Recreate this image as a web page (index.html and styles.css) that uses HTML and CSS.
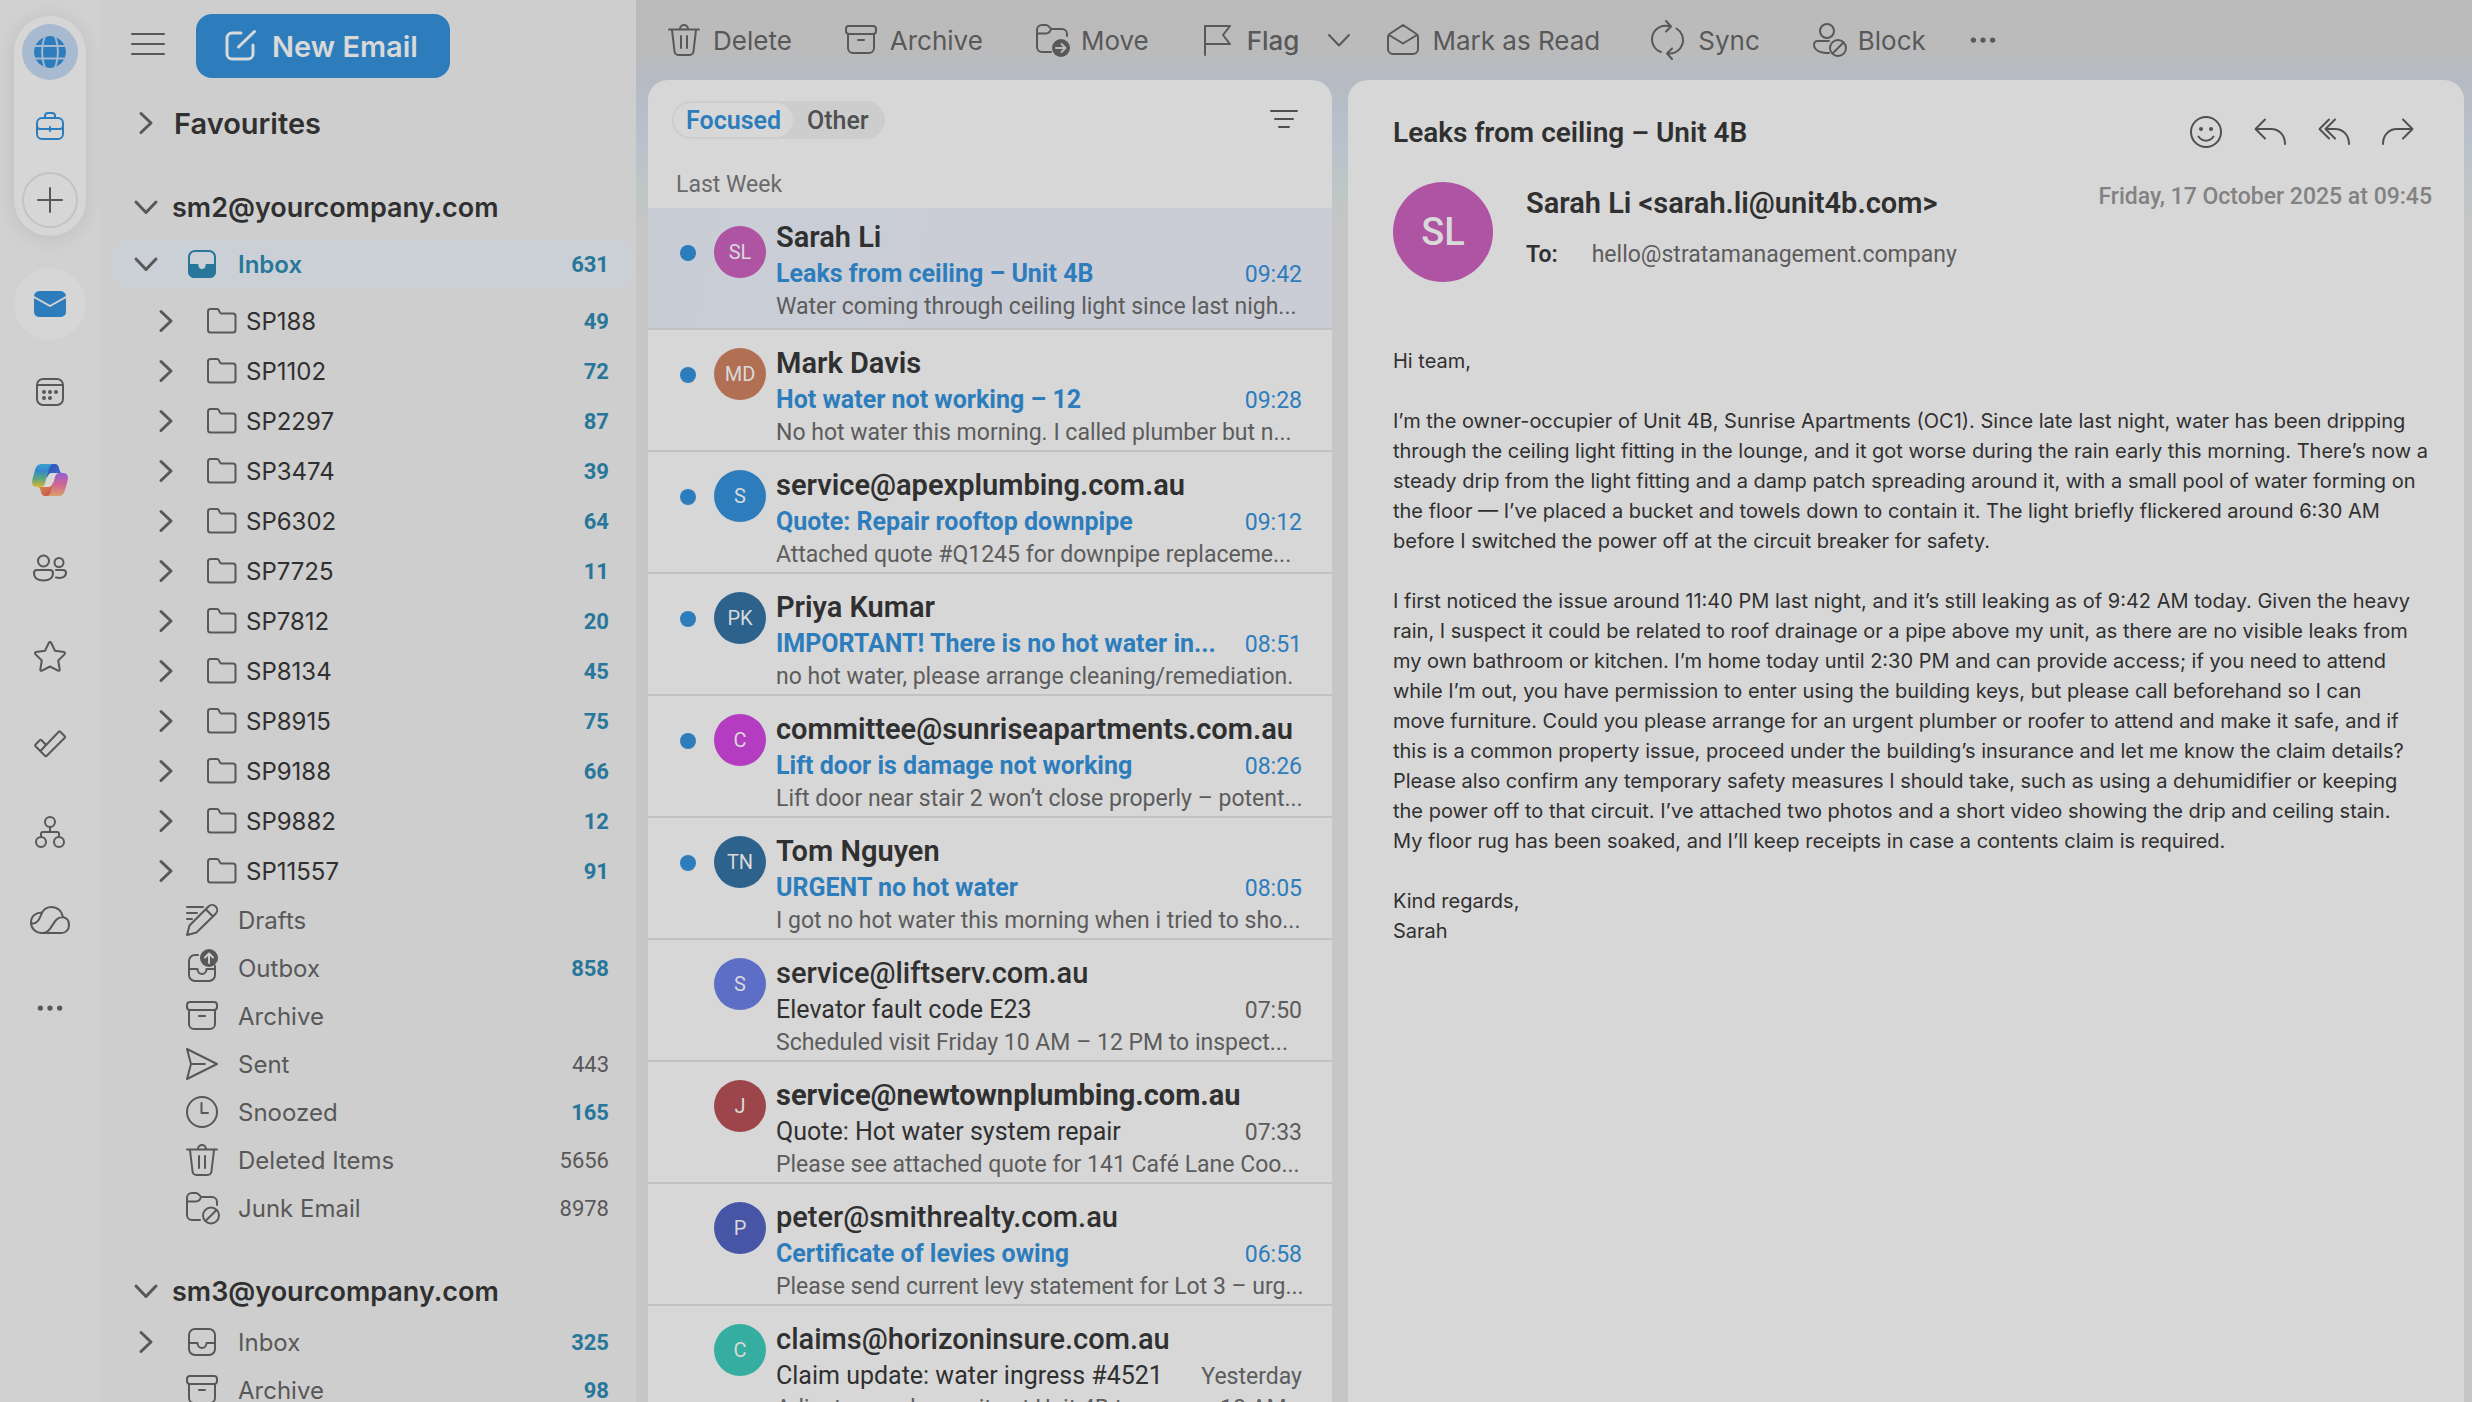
FILE: index.html
```html
<!DOCTYPE html>
<html lang="en">
<head>
    <meta charset="UTF-8">
    <meta name="viewport" content="width=device-width, initial-scale=1.0">
    <title>Inbox - Mail</title>
    <link rel="stylesheet" href="styles.css">
</head>
<body>
    <!-- icon sprite -->
    <svg class="sprite" aria-hidden="true">
        <symbol id="chev-right" viewBox="0 0 32 32"><path d="M11 6.500l10 9.500-10 9.500"/></symbol>
        <symbol id="chev-down" viewBox="0 0 32 32"><path d="M6 11l10 10.500L26 11"/></symbol>
        <symbol id="trash" viewBox="0 0 32 32"><path d="M1 5.500h30M12 5a4 4 0 0 1 8 0M4 6l2.500 21a4 4 0 0 0 4 4h11a4 4 0 0 0 4-4L28 6M13 12v12M19 12v12"/></symbol>
        <symbol id="archive" viewBox="0 0 32 32"><rect x="1" y="2" width="30" height="8" rx="3"/><path d="M3 10v14a5 5 0 0 0 5 5h16a5 5 0 0 0 5-5V10M13 16h6"/></symbol>
        <symbol id="folder" viewBox="0 0 32 32"><path d="M2 25V6.500A2.500 2.500 0 0 1 4.500 4h6.500a2 2 0 0 1 1.800 1.200L14 7.500a2 2 0 0 0 1.800 1H27A2.500 2.500 0 0 1 29.500 11v14a2.500 2.500 0 0 1-2.500 2.500H4.500A2.500 2.500 0 0 1 2 25z"/></symbol>
        <symbol id="inbox" viewBox="0 0 32 32"><rect x="3" y="3" width="26" height="26" rx="6"/><path d="M3 17h8.500c0 3 2 5 4.500 5s4.500-2 4.500-5H29"/></symbol>
        <symbol id="inbox-fill" viewBox="0 0 32 32"><rect x="3" y="3" width="26" height="26" rx="6"/><path class="solid" d="M3 17h8.500c0 3 2 5 4.500 5s4.500-2 4.500-5H29v7a5 5 0 0 1-5 5H8a5 5 0 0 1-5-5z"/></symbol>
        <symbol id="outbox" viewBox="0 0 32 32"><path d="M12 3H9a6 6 0 0 0-6 6v14a6 6 0 0 0 6 6h14a6 6 0 0 0 6-6v-9M3 17h8.500c0 3 2 5 4.500 5s4.500-2 4.500-5H29"/><circle class="fill" cx="23" cy="6" r="9"/><path class="knock" d="M23 11V2M19 5.500l4-4 4 4"/></symbol>
        <symbol id="drafts" viewBox="0 0 32 32"><path d="M1 3h16M1 9h10M1 15h5M1 31l2.500-9.500L22.500 2.500a5 5 0 0 1 7.200 7.200L10.500 28.500zM20 5.500l6.500 6.500"/></symbol>
        <symbol id="sent" viewBox="0 0 32 32"><path d="M1 1l30 15L1 31l4-15zM5 16h14"/></symbol>
        <symbol id="clock" viewBox="0 0 32 32"><circle cx="16" cy="16" r="15"/><path d="M15.500 7v10H22"/></symbol>
        <symbol id="junk" viewBox="0 0 32 32"><path d="M14 28H6a5 5 0 0 1-5-5V6a5 5 0 0 1 5-5h4c3 0 4 4 6 4h10a5 5 0 0 1 5 5v3M1 9.500h9c3 0 4-1.500 5-4.500"/><circle cx="25" cy="23.500" r="8"/><path d="M19.500 29l11-11"/></symbol>
        <symbol id="move" viewBox="0 0 32 32"><path d="M15 28H6a5 5 0 0 1-5-5V6a5 5 0 0 1 5-5h4c3 0 4 4 6 4h10a5 5 0 0 1 5 5v2M1 9.500h9c3 0 4-1.500 5-4.500"/><circle class="fill" cx="25" cy="24" r="9"/><path class="knock" d="M20 24h9M25.500 20l4 4-4 4"/></symbol>
        <symbol id="flag" viewBox="0 0 32 32"><path d="M3 31V2h25l-7 9 7 9H3"/></symbol>
        <symbol id="mail-open" viewBox="0 0 32 32"><path d="M1 12.500a3 3 0 0 1 1.500-2.500L16 1l13.500 9a3 3 0 0 1 1.500 2.500V25a5 5 0 0 1-5 5H6a5 5 0 0 1-5-5zM2 11l14 8.500L30 11"/></symbol>
        <symbol id="sync" viewBox="0 0 32 32"><path d="M8 28A13.500 13.500 0 0 1 17 2.500M13-3l5 5.500-5 5M23.500 4.500A13.500 13.500 0 0 1 15 29.500M19 24.500l-5 5 5 5.500"/></symbol>
        <symbol id="block" viewBox="0 0 32 32"><circle cx="14" cy="7" r="7"/><path d="M16 29C7 29 1 26 1 20.500A3.500 3.500 0 0 1 4.500 17H16"/><circle cx="25" cy="24" r="8"/><path d="M19.500 29.500l11-11"/></symbol>
        <symbol id="dots" viewBox="0 0 32 32"><circle class="fill" cx="5" cy="16" r="3"/><circle class="fill" cx="16" cy="16" r="3"/><circle class="fill" cx="27" cy="16" r="3"/></symbol>
        <symbol id="filter" viewBox="0 0 32 32"><path d="M3 7h26M7 15h18M11 23h10"/></symbol>
        <symbol id="menu" viewBox="0 0 32 32"><path d="M0 6h32M0 16h32M0 26h32"/></symbol>
        <symbol id="compose" viewBox="0 0 32 32"><path d="M17 3H8a5 5 0 0 0-5 5v16a5 5 0 0 0 5 5h16a5 5 0 0 0 5-5v-9M14.500 17L30.500 1.500"/></symbol>
        <symbol id="globe" viewBox="0 0 32 32"><circle class="fill" cx="16" cy="16" r="16"/><path class="knock" d="M0 10h32M0 22.500h32M11.500-1c-4.500 10-4.500 24 0 34M20.500-1c4.500 10 4.500 24 0 34"/></symbol>
        <symbol id="briefcase" viewBox="0 0 32 32"><rect x="3" y="8" width="26" height="21" rx="5"/><path d="M11 8V6a3 3 0 0 1 3-3h4a3 3 0 0 1 3 3v2M3 16a3 3 0 0 0 3 3h20a3 3 0 0 0 3-3M16 17v4"/></symbol>
        <symbol id="plus" viewBox="0 0 32 32"><path d="M16 4v24M4 16h24"/></symbol>
        <symbol id="mail" viewBox="0 0 32 32"><path class="fill" d="M0 8.500A5.500 5.500 0 0 1 5.500 3h21A5.500 5.500 0 0 1 32 8.500V24a5 5 0 0 1-5 5H5a5 5 0 0 1-5-5z"/><path class="knock" d="M-1 8.500l17 9.500 17-9.500"/></symbol>
        <symbol id="calendar" viewBox="0 0 32 32"><rect x="3" y="3" width="26" height="26" rx="6"/><path d="M3 9h26"/><circle class="fill" cx="10" cy="16" r="2"/><circle class="fill" cx="16" cy="16" r="2"/><circle class="fill" cx="22" cy="16" r="2"/><circle class="fill" cx="10" cy="22" r="2"/><circle class="fill" cx="16" cy="22" r="2"/></symbol>
        <symbol id="people" viewBox="0 0 36 32"><circle cx="11.500" cy="9" r="5.500"/><circle cx="27" cy="10.500" r="4.500"/><path d="M5 18h13a3 3 0 0 1 3 3c0 5-4 7.500-9.500 7.500S2 26 2 21a3 3 0 0 1 3-3zM24 18h7a3 3 0 0 1 3 3c0 3.500-4 6-10 4.500"/></symbol>
        <symbol id="star" viewBox="0 0 32 32"><path d="M15 2.500a1.200 1.200 0 0 1 2 0l4 8.300 9 1.300a1.200 1.200 0 0 1 .7 2l-6.500 6.400 1.500 9a1.200 1.200 0 0 1-1.700 1.200L16 26.500l-8 4.200a1.200 1.200 0 0 1-1.700-1.200l1.500-9L1.300 14.100a1.200 1.200 0 0 1 .7-2l9-1.300z"/></symbol>
        <symbol id="todo" viewBox="0 0 32 32"><path d="M26 3.500l5 5a.800.800 0 0 1 0 1L12.500 28a1 1 0 0 1-1.300 0L1.300 18a1 1 0 0 1 0-1.300L6 12a1 1 0 0 1 1.300 0l4.800 5L25 3.500a.8.800 0 0 1 1 0zM12 17l-5.500 6"/></symbol>
        <symbol id="org" viewBox="0 0 32 32"><circle cx="16" cy="6" r="5"/><circle cx="7" cy="26" r="5"/><circle cx="25" cy="26" r="5"/><path d="M16 11v5M7 21v-3a2 2 0 0 1 2-2h14a2 2 0 0 1 2 2v3"/></symbol>
        <symbol id="cloud" viewBox="0 0 40 32"><path d="M12 29C5 29 1 24 1 18.500 1 12 6 8.500 12 8.500 14 5 17.500 3 21.500 3c6 0 10.500 4 11.500 10 3.500.800 6 4 6 8 0 5-3.500 8-7.500 8zM12.500 8C10 12 9 20 2 19.500M33 13c-11 0-10 16-20.500 16"/></symbol>
        <symbol id="smile" viewBox="0 0 32 32"><circle cx="16" cy="16" r="15"/><circle class="fill" cx="11" cy="13" r="2"/><circle class="fill" cx="21" cy="13" r="2"/><path d="M8.500 20.500c4 5.500 11 5.500 15 0"/></symbol>
        <symbol id="reply" viewBox="0 0 32 32"><path d="M11 3.500L1.500 13l9.500 9.500M1.500 13H17c8 0 14 6 14 15"/></symbol>
        <symbol id="reply-all" viewBox="0 0 32 32"><path d="M11 3.500L1.500 13l9.500 9.500M17 3.500L7.500 13l9.500 9.500M7.500 13H17c8 0 14 6 14 15"/></symbol>
        <symbol id="forward" viewBox="0 0 32 32"><path d="M21 3.500l9.500 9.500-9.500 9.500M30.500 13H15C7 13 1 19 1 28"/></symbol>
    </svg>

    <div class="app">
        <nav class="rail" aria-label="Apps">
            <div class="account-pill">
                <button class="pill-btn active" aria-label="All accounts"><svg class="icon"><use href="#globe"/></svg></button>
                <button class="pill-btn" aria-label="Work"><svg class="icon"><use href="#briefcase"/></svg></button>
                <button class="pill-btn add" aria-label="Add account"><svg class="icon"><use href="#plus"/></svg></button>
            </div>
            <div class="rail-items">
                <button class="rail-btn active" aria-label="Mail"><svg class="icon"><use href="#mail"/></svg></button>
                <button class="rail-btn" aria-label="Calendar"><svg class="icon"><use href="#calendar"/></svg></button>
                <button class="rail-btn" aria-label="Copilot">
                    <svg class="icon-copilot" viewBox="0 0 36 32">
                        <defs>
                            <linearGradient id="cp-left" x1="0" y1="0" x2="0" y2="1"><stop offset="0" stop-color="#3a9fd2"/><stop offset=".3" stop-color="#3488cc"/><stop offset=".65" stop-color="#5fa67c"/><stop offset="1" stop-color="#d8b832"/></linearGradient>
                            <linearGradient id="cp-right" x1="0" y1="0" x2="0" y2="1"><stop offset="0" stop-color="#9460d2"/><stop offset=".5" stop-color="#cf6594"/><stop offset="1" stop-color="#d9a06a"/></linearGradient>
                            <linearGradient id="cp-top" x1="0" y1="0" x2="1" y2="1"><stop offset="0" stop-color="#2c50b4"/><stop offset="1" stop-color="#3f72d0"/></linearGradient>
                            <linearGradient id="cp-bottom" x1="0" y1="0" x2="1" y2="1"><stop offset="0" stop-color="#d99a4c"/><stop offset="1" stop-color="#c64b4b"/></linearGradient>
                        </defs>
                        <path fill="#d9d9d9" d="M17 9h8l-5 14h-8z"/>
                        <path fill="url(#cp-top)" d="M14 0h9c2 0 3 1 3.700 3l1 3.500C28.300 8.500 29 9 31 9H20c-3 0-4 2-5 5z"/>
                        <path fill="url(#cp-bottom)" d="M22 32h-9c-2 0-3-1-3.700-3l-1-3.500C7.700 23.500 7 23 5 23h11c3 0 4-2 5-5z"/>
                        <path fill="url(#cp-left)" d="M10 0h12c-3 0-4 2-5 5l-4 14c-1 3-2 4-4.500 4H5c-5 0-5.500-4-4.500-8L3 6c1-4 3-6 7-6z"/>
                        <path fill="url(#cp-right)" d="M26 32H14c3 0 4-2 5-5l4-14c1-3 2-4 4.500-4H31c5 0 5.500 4 4.500 8L33 26c-1 4-3 6-7 6z"/>
                    </svg>
                </button>
                <button class="rail-btn" aria-label="People"><svg class="icon wide"><use href="#people"/></svg></button>
                <button class="rail-btn" aria-label="Favourites"><svg class="icon"><use href="#star"/></svg></button>
                <button class="rail-btn" aria-label="To Do"><svg class="icon"><use href="#todo"/></svg></button>
                <button class="rail-btn" aria-label="Org chart"><svg class="icon"><use href="#org"/></svg></button>
                <button class="rail-btn" aria-label="OneDrive"><svg class="icon wider"><use href="#cloud"/></svg></button>
                <button class="rail-btn" aria-label="More apps"><svg class="icon small"><use href="#dots"/></svg></button>
            </div>
        </nav>

        <aside class="sidebar">
            <div class="sidebar-top">
                <button class="menu-btn" aria-label="Toggle folders"><svg class="icon"><use href="#menu"/></svg></button>
                <button class="new-email"><svg class="icon"><use href="#compose"/></svg>New Email</button>
            </div>

            <a href="#" class="section-row"><svg class="chev"><use href="#chev-right"/></svg>Favourites</a>

            <a href="#" class="account-row"><svg class="chev"><use href="#chev-down"/></svg>sm2@yourcompany.com</a>
            <a href="#" class="folder-row selected"><svg class="chev"><use href="#chev-down"/></svg><svg class="icon"><use href="#inbox-fill"/></svg><span class="label">Inbox</span><span class="count unread">631</span></a>

            <div class="subfolders">
                <a href="#" class="sub-row"><svg class="chev"><use href="#chev-right"/></svg><svg class="icon"><use href="#folder"/></svg><span class="label">SP188</span><span class="count unread">49</span></a>
                <a href="#" class="sub-row"><svg class="chev"><use href="#chev-right"/></svg><svg class="icon"><use href="#folder"/></svg><span class="label">SP1102</span><span class="count unread">72</span></a>
                <a href="#" class="sub-row"><svg class="chev"><use href="#chev-right"/></svg><svg class="icon"><use href="#folder"/></svg><span class="label">SP2297</span><span class="count unread">87</span></a>
                <a href="#" class="sub-row"><svg class="chev"><use href="#chev-right"/></svg><svg class="icon"><use href="#folder"/></svg><span class="label">SP3474</span><span class="count unread">39</span></a>
                <a href="#" class="sub-row"><svg class="chev"><use href="#chev-right"/></svg><svg class="icon"><use href="#folder"/></svg><span class="label">SP6302</span><span class="count unread">64</span></a>
                <a href="#" class="sub-row"><svg class="chev"><use href="#chev-right"/></svg><svg class="icon"><use href="#folder"/></svg><span class="label">SP7725</span><span class="count unread">11</span></a>
                <a href="#" class="sub-row"><svg class="chev"><use href="#chev-right"/></svg><svg class="icon"><use href="#folder"/></svg><span class="label">SP7812</span><span class="count unread">20</span></a>
                <a href="#" class="sub-row"><svg class="chev"><use href="#chev-right"/></svg><svg class="icon"><use href="#folder"/></svg><span class="label">SP8134</span><span class="count unread">45</span></a>
                <a href="#" class="sub-row"><svg class="chev"><use href="#chev-right"/></svg><svg class="icon"><use href="#folder"/></svg><span class="label">SP8915</span><span class="count unread">75</span></a>
                <a href="#" class="sub-row"><svg class="chev"><use href="#chev-right"/></svg><svg class="icon"><use href="#folder"/></svg><span class="label">SP9188</span><span class="count unread">66</span></a>
                <a href="#" class="sub-row"><svg class="chev"><use href="#chev-right"/></svg><svg class="icon"><use href="#folder"/></svg><span class="label">SP9882</span><span class="count unread">12</span></a>
                <a href="#" class="sub-row"><svg class="chev"><use href="#chev-right"/></svg><svg class="icon"><use href="#folder"/></svg><span class="label">SP11557</span><span class="count unread">91</span></a>
            </div>

            <a href="#" class="folder-row"><span class="chev"></span><svg class="icon"><use href="#drafts"/></svg><span class="label">Drafts</span></a>
            <a href="#" class="folder-row"><span class="chev"></span><svg class="icon"><use href="#outbox"/></svg><span class="label">Outbox</span><span class="count unread">858</span></a>
            <a href="#" class="folder-row"><span class="chev"></span><svg class="icon"><use href="#archive"/></svg><span class="label">Archive</span></a>
            <a href="#" class="folder-row"><span class="chev"></span><svg class="icon"><use href="#sent"/></svg><span class="label">Sent</span><span class="count">443</span></a>
            <a href="#" class="folder-row"><span class="chev"></span><svg class="icon"><use href="#clock"/></svg><span class="label">Snoozed</span><span class="count unread">165</span></a>
            <a href="#" class="folder-row"><span class="chev"></span><svg class="icon"><use href="#trash"/></svg><span class="label">Deleted Items</span><span class="count">5656</span></a>
            <a href="#" class="folder-row"><span class="chev"></span><svg class="icon"><use href="#junk"/></svg><span class="label">Junk Email</span><span class="count">8978</span></a>

            <a href="#" class="account-row"><svg class="chev"><use href="#chev-down"/></svg>sm3@yourcompany.com</a>
            <a href="#" class="folder-row"><svg class="chev"><use href="#chev-right"/></svg><svg class="icon"><use href="#inbox"/></svg><span class="label">Inbox</span><span class="count unread">325</span></a>
            <a href="#" class="folder-row"><span class="chev"></span><svg class="icon"><use href="#archive"/></svg><span class="label">Archive</span><span class="count unread">98</span></a>
        </aside>

        <main class="main">
            <div class="toolbar">
                <button class="tool-btn"><svg class="icon"><use href="#trash"/></svg>Delete</button>
                <button class="tool-btn"><svg class="icon"><use href="#archive"/></svg>Archive</button>
                <button class="tool-btn"><svg class="icon"><use href="#move"/></svg>Move</button>
                <div class="tool-group">
                    <button class="tool-btn medium"><svg class="icon"><use href="#flag"/></svg>Flag</button>
                    <button class="tool-btn" aria-label="Flag options"><svg class="icon"><use href="#chev-down"/></svg></button>
                    <button class="tool-btn"><svg class="icon"><use href="#mail-open"/></svg>Mark as Read</button>
                </div>
                <button class="tool-btn"><svg class="icon"><use href="#sync"/></svg>Sync</button>
                <button class="tool-btn"><svg class="icon"><use href="#block"/></svg>Block</button>
                <button class="tool-btn more" aria-label="More"><svg class="icon small"><use href="#dots"/></svg></button>
            </div>

            <div class="panels">
                <section class="message-list">
                    <div class="list-head">
                        <div class="tabs">
                            <button class="tab active">Focused</button>
                            <button class="tab">Other</button>
                        </div>
                        <button class="filter-btn" aria-label="Filter"><svg class="icon"><use href="#filter"/></svg></button>
                    </div>
                    <div class="group-title">Last Week</div>

                    <article class="message unread selected">
                        <span class="dot"></span>
                        <div class="avatar pink">SL</div>
                        <div class="message-text">
                            <div class="sender">Sarah Li</div>
                            <div class="subject-line"><span class="subject">Leaks from ceiling – Unit 4B</span><time>09:42</time></div>
                            <div class="preview">Water coming through ceiling light since last nigh...</div>
                        </div>
                    </article>
                    <article class="message unread">
                        <span class="dot"></span>
                        <div class="avatar orange">MD</div>
                        <div class="message-text">
                            <div class="sender">Mark Davis</div>
                            <div class="subject-line"><span class="subject">Hot water not working – 12</span><time>09:28</time></div>
                            <div class="preview">No hot water this morning. I called plumber but n...</div>
                        </div>
                    </article>
                    <article class="message unread">
                        <span class="dot"></span>
                        <div class="avatar blue">S</div>
                        <div class="message-text">
                            <div class="sender">service@apexplumbing.com.au</div>
                            <div class="subject-line"><span class="subject">Quote: Repair rooftop downpipe</span><time>09:12</time></div>
                            <div class="preview">Attached quote #Q1245 for downpipe replaceme...</div>
                        </div>
                    </article>
                    <article class="message unread">
                        <span class="dot"></span>
                        <div class="avatar navy">PK</div>
                        <div class="message-text">
                            <div class="sender">Priya Kumar</div>
                            <div class="subject-line"><span class="subject">IMPORTANT! There is no hot water in...</span><time>08:51</time></div>
                            <div class="preview">no hot water, please arrange cleaning/remediation.</div>
                        </div>
                    </article>
                    <article class="message unread">
                        <span class="dot"></span>
                        <div class="avatar magenta">C</div>
                        <div class="message-text">
                            <div class="sender">committee@sunriseapartments.com.au</div>
                            <div class="subject-line"><span class="subject">Lift door is damage not working</span><time>08:26</time></div>
                            <div class="preview">Lift door near stair 2 won’t close properly – potent...</div>
                        </div>
                    </article>
                    <article class="message unread">
                        <span class="dot"></span>
                        <div class="avatar navy">TN</div>
                        <div class="message-text">
                            <div class="sender">Tom Nguyen</div>
                            <div class="subject-line"><span class="subject">URGENT no hot water</span><time>08:05</time></div>
                            <div class="preview">I got no hot water this morning when i tried to sho...</div>
                        </div>
                    </article>
                    <article class="message">
                        <span class="dot"></span>
                        <div class="avatar periwinkle">S</div>
                        <div class="message-text">
                            <div class="sender">service@liftserv.com.au</div>
                            <div class="subject-line"><span class="subject">Elevator fault code E23</span><time>07:50</time></div>
                            <div class="preview">Scheduled visit Friday 10 AM – 12 PM to inspect...</div>
                        </div>
                    </article>
                    <article class="message">
                        <span class="dot"></span>
                        <div class="avatar red">J</div>
                        <div class="message-text">
                            <div class="sender bold">service@newtownplumbing.com.au</div>
                            <div class="subject-line"><span class="subject">Quote: Hot water system repair</span><time>07:33</time></div>
                            <div class="preview">Please see attached quote for 141 Café Lane Coo...</div>
                        </div>
                    </article>
                    <article class="message flagged">
                        <span class="dot"></span>
                        <div class="avatar indigo">P</div>
                        <div class="message-text">
                            <div class="sender">peter@smithrealty.com.au</div>
                            <div class="subject-line"><span class="subject">Certificate of levies owing</span><time>06:58</time></div>
                            <div class="preview">Please send current levy statement for Lot 3 – urg...</div>
                        </div>
                    </article>
                    <article class="message">
                        <span class="dot"></span>
                        <div class="avatar teal">C</div>
                        <div class="message-text">
                            <div class="sender">claims@horizoninsure.com.au</div>
                            <div class="subject-line"><span class="subject">Claim update: water ingress #4521</span><time>Yesterday</time></div>
                            <div class="preview">Adjuster can be onsite at Unit 4B tomorrow 10 AM...</div>
                        </div>
                    </article>
                </section>

                <section class="reading">
                    <div class="reading-head">
                        <h1>Leaks from ceiling – Unit 4B</h1>
                        <div class="actions">
                            <button aria-label="React"><svg class="icon"><use href="#smile"/></svg></button>
                            <button aria-label="Reply"><svg class="icon"><use href="#reply"/></svg></button>
                            <button aria-label="Reply all"><svg class="icon"><use href="#reply-all"/></svg></button>
                            <button aria-label="Forward"><svg class="icon"><use href="#forward"/></svg></button>
                        </div>
                    </div>
                    <div class="from">
                        <div class="avatar large pink">SL</div>
                        <div class="from-text">
                            <div class="from-name">Sarah Li &lt;sarah.li@unit4b.com&gt;</div>
                            <div class="to-line"><span class="to-label">To:</span><span>hello@stratamanagement.company</span></div>
                        </div>
                        <time class="sent-at">Friday, 17 October 2025 at 09:45</time>
                    </div>
                    <div class="body">
                        <p>Hi team,</p>
                        <p>I’m the owner-occupier of Unit 4B, Sunrise Apartments (OC1). Since late last night, water has been dripping through the ceiling light fitting in the lounge, and it got worse during the rain early this morning. There’s now a steady drip from the light fitting and a damp patch spreading around it, with a small pool of water forming on the floor — I’ve placed a bucket and towels down to contain it. The light briefly flickered around 6:30 AM before I switched the power off at the circuit breaker for safety.</p>
                        <p>I first noticed the issue around 11:40 PM last night, and it’s still leaking as of 9:42 AM today. Given the heavy rain, I suspect it could be related to roof drainage or a pipe above my unit, as there are no visible leaks from my own bathroom or kitchen. I’m home today until 2:30 PM and can provide access; if you need to attend while I’m out, you have permission to enter using the building keys, but please call beforehand so I can<br>
                        move furniture. Could you please arrange for an urgent plumber or roofer to attend and make it safe, and if<br>
                        this is a common property issue, proceed under the building’s insurance and let me know the claim details?<br>
                        Please also confirm any temporary safety measures I should take, such as using a dehumidifier or keeping<br>
                        the power off to that circuit. I’ve attached two photos and a short video showing the drip and ceiling stain.<br>
                        My floor rug has been soaked, and I’ll keep receipts in case a contents claim is required.</p>
                        <p>Kind regards,<br>Sarah</p>
                    </div>
                </section>
            </div>
        </main>
    </div>
</body>
</html>
```
FILE: styles.css
```css
* {
    margin: 0;
    padding: 0;
    box-sizing: border-box;
}

body {
    font-family: Inter, "Liberation Sans", sans-serif;
    color: #303030;
    background: #cecece;
    height: 100vh;
    overflow: hidden;
}

button {
    font: inherit;
    color: inherit;
    background: none;
    border: none;
    cursor: pointer;
}

a {
    color: inherit;
    text-decoration: none;
}

/* icons */
.sprite {
    position: absolute;
    width: 0;
    height: 0;
}

.icon,
.chev {
    width: 32px;
    height: 32px;
    flex: none;
    fill: none;
    stroke: currentColor;
    stroke-width: 2;
    stroke-linecap: round;
    stroke-linejoin: round;
    overflow: visible;
}

symbol {
    overflow: visible;
}

.icon.small {
    width: 28px;
    height: 28px;
}

.icon.wide {
    width: 36px;
}

.icon.wider {
    width: 40px;
}

.icon-copilot {
    width: 36px;
    height: 32px;
}

.fill {
    fill: currentColor;
    stroke: none;
}

.solid {
    fill: currentColor;
}

.knock {
    stroke: var(--knock, #cecece);
}

.app {
    display: flex;
    height: 100vh;
}

/* app rail */
.rail {
    flex: none;
    width: 100px;
    padding: 16px 14px;
    background: #d1d1d1;
    color: #585858;
}

.account-pill {
    display: flex;
    flex-direction: column;
    gap: 18px;
    padding: 8px;
    border-radius: 36px;
    background: #d6d6d6;
    box-shadow: 0 2px 20px rgba(0, 0, 0, 0.09);
}

.pill-btn {
    display: grid;
    place-items: center;
    width: 56px;
    height: 56px;
    border-radius: 50%;
    color: #2d7dbd;
}

.pill-btn.active {
    --knock: #a7bad0;
    background: #a7bad0;
}

.pill-btn.active .icon {
    overflow: hidden;
    border-radius: 50%;
}

.pill-btn.add {
    border: 2px solid #c3c3c3;
    color: #585858;
}

.rail-items {
    display: flex;
    flex-direction: column;
    gap: 16px;
    margin-top: 32px;
}

.rail-btn {
    display: grid;
    place-items: center;
    width: 72px;
    height: 72px;
    border-radius: 50%;
}

.rail-btn.active {
    --knock: #d6d6d6;
    background: #d6d6d6;
    color: #2d7dbd;
}

/* folder pane */
.sidebar {
    flex: none;
    width: 536px;
    padding: 14px 2px 0 12px;
    background: #cecece;
    color: #585858;
    overflow: hidden;
}

.sidebar-top {
    display: flex;
    gap: 32px;
    padding-left: 20px;
}

.menu-btn {
    width: 32px;
}

.new-email {
    display: flex;
    align-items: center;
    gap: 16px;
    height: 64px;
    padding: 0 32px 0 28px;
    border-radius: 16px;
    background: #2d7dbd;
    color: #d9d9d9;
    font-size: 29px;
    font-weight: 600;
}

.new-email .icon {
    stroke-width: 3;
}

.section-row,
.account-row,
.folder-row,
.sub-row {
    display: flex;
    align-items: center;
    padding: 0 25px 0 18px;
}

.section-row {
    gap: 12px;
    height: 46px;
    margin-top: 22px;
    color: #303030;
    font-size: 29px;
    font-weight: 600;
}

.account-row {
    gap: 10px;
    height: 54px;
    margin-top: 32px;
    color: #303030;
    font-size: 27px;
    font-weight: 600;
}

.section-row + .account-row {
    margin-top: 34px;
}

.section-row .chev,
.account-row .chev,
.folder-row .chev {
    color: #585858;
}

.folder-row {
    height: 48px;
    font-size: 24px;
}

.folder-row .icon {
    margin: 0 20px 0 24px;
}

.folder-row.selected {
    margin: 6px 0 8px;
    border-radius: 16px;
    background: #cad0d5;
    color: #28779b;
    font-weight: 600;
}

.sub-row {
    height: 50px;
    padding-left: 38px;
    color: #303030;
    font-size: 24px;
}

.sub-row .chev {
    color: #585858;
}

.sub-row .icon {
    margin: 0 8px 0 24px;
    color: #585858;
}

.chev {
    stroke-width: 3;
}

.label {
    flex: 1;
}

.count {
    font-family: Roboto, sans-serif;
    font-size: 22px;
}

.count.unread {
    color: #28779b;
    font-weight: 700;
}

/* main area */
.main {
    flex: 1;
    min-width: 0;
    display: flex;
    flex-direction: column;
    padding: 0 8px 0 12px;
    background: linear-gradient(#bababa 0, #bbbbbc 50px, #b6bac2 75px, #b9c1cc 140px, #bec6c6 190px, #c6c6c6 225px);
}

.toolbar {
    --knock: #bbbbbc;
    display: flex;
    align-items: center;
    gap: 53px;
    height: 80px;
    padding-left: 20px;
    color: #585858;
    font-size: 26px;
}

.tool-group {
    display: flex;
    gap: 24px;
}

.tool-group .tool-btn:last-child {
    margin-left: 8px;
}

.tool-btn {
    display: flex;
    align-items: center;
    gap: 13px;
    white-space: nowrap;
}

.tool-btn.medium {
    font-weight: 500;
}

.tool-btn.more {
    margin-left: -10px;
}

.panels {
    flex: 1;
    min-height: 0;
    display: grid;
    grid-template-columns: minmax(0, 38fr) minmax(0, 62fr);
    gap: 16px;
    font-family: Roboto, "Liberation Sans", sans-serif;
}

.message-list,
.reading {
    background: #d7d7d7;
    border-radius: 20px 20px 0 0;
    overflow: hidden;
}

/* message list */
.list-head {
    display: flex;
    justify-content: space-between;
    align-items: center;
    padding: 21px 32px 0 24px;
}

.tabs {
    display: flex;
    padding: 2px;
    border-radius: 19px;
    background: #cdcdcd;
    font-size: 25px;
    font-weight: 500;
    color: #505050;
}

.tab {
    height: 34px;
    padding: 0 14px;
    border-radius: 17px;
}

.tab.active {
    padding: 0 12px;
    background: #d7d7d7;
    color: #2d7dbd;
    font-weight: 600;
}

.filter-btn {
    height: 32px;
    color: #505050;
}

.group-title {
    padding: 32px 28px 9px;
    font-size: 23px;
    line-height: 28px;
    color: #6a6a6a;
}

.message {
    display: flex;
    padding: 0 30px 0 32px;
    border-bottom: 2px solid #c2c2c2;
}

.message.selected {
    background: linear-gradient(100deg, #c9ced6, #cbccd5);
}

.dot {
    flex: none;
    width: 16px;
    height: 16px;
    margin: 37px 18px 0 0;
    border-radius: 50%;
}

.unread .dot {
    background: #2d7dbd;
}

.avatar {
    flex: none;
    display: grid;
    place-items: center;
    width: 52px;
    height: 52px;
    border-radius: 50%;
    color: #d9d9d9;
    font-size: 20px;
}

.message .avatar {
    margin: 18px 10px 0 0;
}

.avatar.large {
    width: 100px;
    height: 100px;
    font-size: 38px;
    font-weight: 500;
}

.pink { background: #ae54a3; }
.orange { background: #b17053; }
.blue { background: #2d7dbd; }
.navy { background: #2c628c; }
.magenta { background: #b43cc0; }
.periwinkle { background: #5c6ec6; }
.red { background: #9c464b; }
.indigo { background: #4655a6; }
.teal { background: #36ada1; }

.message-text {
    flex: 1;
    min-width: 0;
    padding: 13px 0 1px;
    white-space: nowrap;
}

.selected .message-text {
    padding: 9px 0 5px;
}

.sender {
    font-size: 29px;
    font-weight: 500;
    line-height: 40px;
}

.unread .sender {
    font-weight: 600;
}

.sender.bold {
    font-weight: 700;
}

.subject-line {
    display: flex;
    justify-content: space-between;
    height: 34px;
    font-size: 25px;
    line-height: 34px;
}

.subject-line time {
    font-size: 23px;
    line-height: 36px;
    color: #5c5c5c;
}

.preview {
    font-size: 23px;
    line-height: 32px;
    color: #5c5c5c;
}

.unread .subject,
.flagged .subject {
    color: #2d7dbd;
    font-weight: 700;
}

.unread time,
.flagged time {
    color: #2d7dbd;
}

/* reading pane */
.reading {
    padding: 36px 32px 0 45px;
}

.reading-head {
    display: flex;
    justify-content: space-between;
    align-items: center;
    height: 32px;
}

.reading h1 {
    font-size: 28px;
    font-weight: 600;
}

.actions {
    display: flex;
    gap: 32px;
    margin-right: 18px;
    color: #505050;
}

.actions button {
    height: 32px;
}

.from {
    display: flex;
    margin-top: 34px;
}

.from-text {
    flex: 1;
    padding: 3px 0 0 33px;
}

.from-name {
    font-size: 29px;
    font-weight: 600;
    line-height: 36px;
}

.to-line {
    display: flex;
    gap: 34px;
    margin-top: 18px;
    font-size: 23px;
    line-height: 32px;
    color: #5c5c5c;
}

.to-label {
    color: #303030;
    font-weight: 600;
}

.sent-at {
    font-size: 23px;
    font-weight: 500;
    line-height: 30px;
    color: #828282;
}

.body {
    margin-top: 64px;
    font-family: Inter, "Liberation Sans", sans-serif;
    font-size: 20px;
    line-height: 30px;
}

.body p {
    margin-bottom: 30px;
}
```
